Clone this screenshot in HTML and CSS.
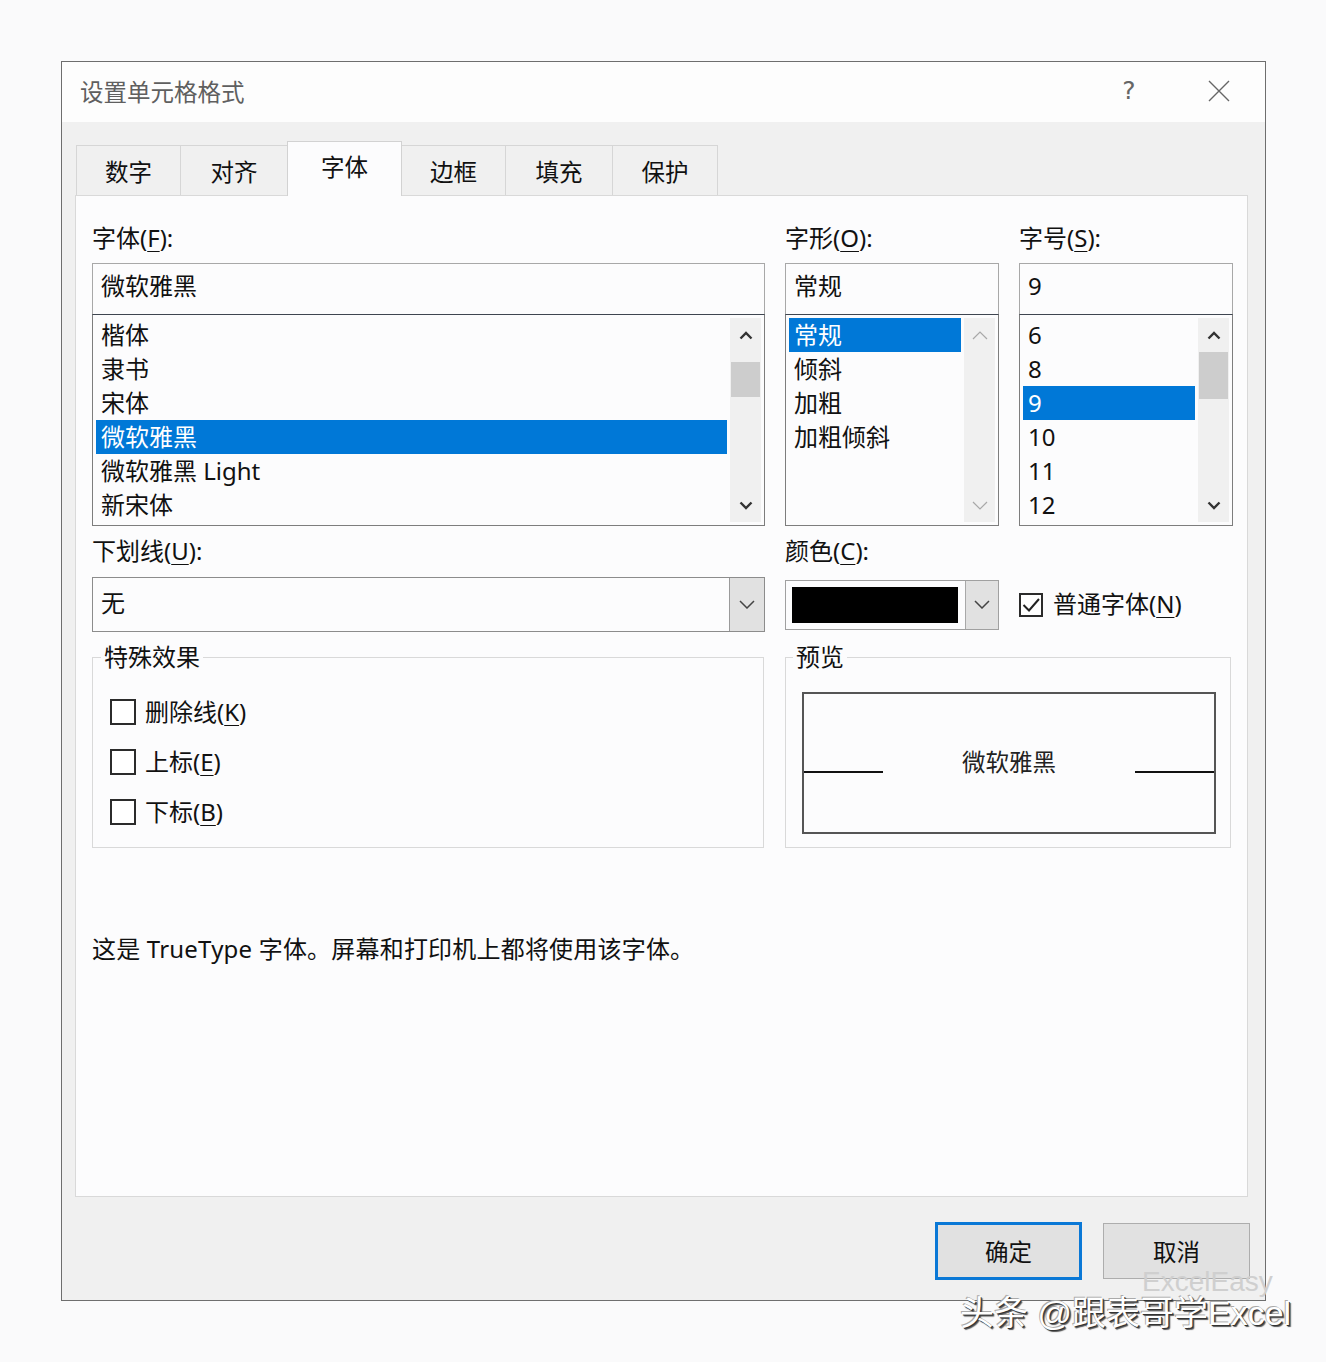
FILE: index.html
```html
<!DOCTYPE html>
<html lang="zh-CN">
<head>
<meta charset="utf-8">
<title>设置单元格格式</title>
<link rel="stylesheet" href="styles.css">
</head>
<body>
<div class="dialog">
  <div class="titlebar">
    <span class="title">设置单元格格式</span>
    <span class="help">?</span>
    <span class="close"><svg width="22" height="22" viewBox="0 0 22 22"><path d="M1 1 L21 21 M21 1 L1 21" stroke="#666" stroke-width="1.4" fill="none"/></svg></span>
  </div>
  <div class="body">
    <div class="tabs">
      <div class="tab w1">数字</div>
      <div class="tab w2">对齐</div>
      <div class="tab w3 active">字体</div>
      <div class="tab w4">边框</div>
      <div class="tab w5">填充</div>
      <div class="tab w6 last">保护</div>
    </div>
    <div class="panel">
      <div class="grid">
        <div class="label">字体(<u>F</u>):</div>
        <div class="label">字形(<u>O</u>):</div>
        <div class="label">字号(<u>S</u>):</div>

        <div class="combo">
          <div class="input">微软雅黑</div>
          <div class="list">
            <div class="items">
              <div class="item">楷体</div>
              <div class="item">隶书</div>
              <div class="item">宋体</div>
              <div class="item sel">微软雅黑</div>
              <div class="item">微软雅黑 Light</div>
              <div class="item">新宋体</div>
            </div>
            <div class="scroll">
              <div class="arrow"><svg width="14" height="9" viewBox="0 0 14 9"><path d="M1.5 7.5 L7 2 L12.5 7.5" stroke="#333" stroke-width="2.4" fill="none"/></svg></div>
              <div class="track"><div class="thumb thumb-font"></div></div>
              <div class="arrow"><svg width="14" height="9" viewBox="0 0 14 9"><path d="M1.5 1.5 L7 7 L12.5 1.5" stroke="#333" stroke-width="2.4" fill="none"/></svg></div>
            </div>
          </div>
        </div>

        <div class="combo">
          <div class="input">常规</div>
          <div class="list">
            <div class="items">
              <div class="item sel">常规</div>
              <div class="item">倾斜</div>
              <div class="item">加粗</div>
              <div class="item">加粗倾斜</div>
            </div>
            <div class="scroll disabled">
              <div class="arrow"><svg width="16" height="9" viewBox="0 0 16 9"><path d="M1 8 L8 1 L15 8" stroke="#a8a8a8" stroke-width="1.2" fill="none"/></svg></div>
              <div class="track"></div>
              <div class="arrow"><svg width="16" height="9" viewBox="0 0 16 9"><path d="M1 1 L8 8 L15 1" stroke="#a8a8a8" stroke-width="1.2" fill="none"/></svg></div>
            </div>
          </div>
        </div>

        <div class="combo">
          <div class="input">9</div>
          <div class="list">
            <div class="items">
              <div class="item">6</div>
              <div class="item">8</div>
              <div class="item sel">9</div>
              <div class="item">10</div>
              <div class="item">11</div>
              <div class="item">12</div>
            </div>
            <div class="scroll">
              <div class="arrow"><svg width="14" height="9" viewBox="0 0 14 9"><path d="M1.5 7.5 L7 2 L12.5 7.5" stroke="#333" stroke-width="2.4" fill="none"/></svg></div>
              <div class="track"><div class="thumb thumb-size"></div></div>
              <div class="arrow"><svg width="14" height="9" viewBox="0 0 14 9"><path d="M1.5 1.5 L7 7 L12.5 1.5" stroke="#333" stroke-width="2.4" fill="none"/></svg></div>
            </div>
          </div>
        </div>

        <div class="label row3">下划线(<u>U</u>):</div>
        <div class="label row3">颜色(<u>C</u>):</div>
        <div class="label row3"></div>

        <div class="select row4">
          <div class="select-text">无</div>
          <div class="drop"><svg width="16" height="9" viewBox="0 0 16 9"><path d="M1 1 L8 8 L15 1" stroke="#444" stroke-width="1.5" fill="none"/></svg></div>
        </div>
        <div class="colorsel row4">
          <div class="swatch"></div>
          <div class="drop"><svg width="16" height="9" viewBox="0 0 16 9"><path d="M1 1 L8 8 L15 1" stroke="#444" stroke-width="1.5" fill="none"/></svg></div>
        </div>
        <div class="check row4">
          <span class="box"><svg width="20" height="20" viewBox="0 0 20 20"><path d="M2.5 10 L8 15.5 L18 4" stroke="#222" stroke-width="2" fill="none"/></svg></span>
          <span class="ctext">普通字体(<u>N</u>)</span>
        </div>

        <div class="group effects">
          <div class="legend">特殊效果</div>
          <div class="checks">
            <div class="check"><span class="box"></span><span class="ctext">删除线(<u>K</u>)</span></div>
            <div class="check"><span class="box"></span><span class="ctext">上标(<u>E</u>)</span></div>
            <div class="check"><span class="box"></span><span class="ctext">下标(<u>B</u>)</span></div>
          </div>
        </div>
        <div class="group preview">
          <div class="legend legend-preview">预览</div>
          <div class="pbox">
            <div class="prow">
              <span class="pline"></span>
              <span class="ptext">微软雅黑</span>
              <span class="pline"></span>
            </div>
          </div>
        </div>
      </div>
      <p class="desc">这是 TrueType 字体。屏幕和打印机上都将使用该字体。</p>
    </div>
    <div class="buttons">
      <div class="btn primary">确定</div>
      <div class="btn">取消</div>
    </div>
  </div>
</div>
<div class="wm-faint">ExcelEasy</div>
<div class="watermark">头条 @跟表哥学Excel</div>
</body>
</html>
```

FILE: styles.css
```css
* { box-sizing: border-box; }
html, body { margin: 0; }
body {
  background: #fafafb;
  padding: 61px 0 0 61px;
  height: 1362px;
  position: relative;
  overflow: hidden;
  font-family: "Noto Sans", "Noto Sans CJK SC", sans-serif;
  color: #111;
  font-size: 24px;
}
u { text-decoration-thickness: 1px; text-underline-offset: 4px; }

.dialog {
  width: 1205px;
  height: 1240px;
  border: 1px solid #6e6e6e;
  background: #f0f0f0;
  display: flex;
  flex-direction: column;
}
.titlebar {
  height: 60px;
  flex: none;
  background: #fdfdfd;
  display: flex;
  align-items: center;
  padding: 0 26px 3px 18px;
}
.title { flex: 1; font-size: 23.5px; color: #5f5f5f; font-family: "Noto Sans CJK SC", sans-serif; }
.help { width: 30px; text-align: center; color: #666; font-size: 25px; font-family: "DejaVu Sans", sans-serif; margin-right: 55px; }
.close { width: 40px; display: flex; justify-content: center; align-items: center; }

.body {
  flex: 1;
  padding: 19px 17px 0 13px;
  display: flex;
  flex-direction: column;
}
.tabs {
  display: flex;
  align-items: flex-end;
  height: 54px;
  margin-left: 1px;
}
.tab {
  height: 50px;
  border: 1px solid #d6d6d6;
  border-bottom: none;
  margin-right: -1px;
  display: flex;
  align-items: center;
  justify-content: center;
  font-family: "Noto Sans CJK SC", sans-serif;
  font-size: 23.5px;
  color: #111;
  background: #f0f0f0;
}
.tab.active {
  height: 55px;
  margin-bottom: -1px;
  background: #fcfcfd;
  position: relative;
  z-index: 1;
  border-color: #d2d2d2;
  padding-bottom: 6px;
}
.w1 { width: 105px; }
.w2 { width: 108px; }
.w3 { width: 115px; }
.w4 { width: 105px; }
.w5 { width: 108px; }
.w6 { width: 106px; }

.panel {
  width: 1173px;
  height: 1002px;
  flex: none;
  border: 1px solid #d9d9d9;
  background: #fcfcfd;
  padding: 27px 13px 0 16px;
}
.grid {
  display: grid;
  grid-template-columns: 673px 214px 214px;
  column-gap: 20px;
}
.label {
  height: 30px;
  line-height: 30px;
  font-size: 24px;
  white-space: nowrap;
}
.label.row3 { margin-top: 10px; }

.combo { margin-top: 10px; }
.input {
  height: 51px;
  border: 1px solid #a8a8a8;
  border-bottom: none;
  padding-left: 8px;
  line-height: 44px;
  font-size: 24px;
}
.list {
  height: 212px;
  border: 1px solid #7d7d7d;
  border-top-color: #3e4550;
  padding: 3px;
  display: flex;
  gap: 3px;
}
.items { flex: 1; min-width: 0; }
.item {
  height: 34px;
  line-height: 34px;
  padding-left: 5px;
  font-size: 24px;
  white-space: nowrap;
}
.item.sel { background: #0078d7; color: #fff; }
.scroll {
  width: 31px;
  background: #f0f0f0;
  display: flex;
  flex-direction: column;
}
.arrow {
  height: 34px;
  display: flex;
  align-items: center;
  justify-content: center;
  flex: none;
}
.track { flex: 1; padding: 0 1px; }
.thumb { background: #cdcdcd; }
.thumb-font { margin-top: 10px; height: 35px; }
.thumb-size { margin-top: 0; height: 47px; }

.row4 { margin-top: 11px; align-self: center; }
.select {
  height: 55px;
  border: 1px solid #8c8c8c;
  display: flex;
}
.select-text { flex: 1; padding-left: 8px; line-height: 50px; font-size: 24px; }
.drop {
  width: 35px;
  background: #e1e1e1;
  border-left: 1px solid #9a9a9a;
  display: flex;
  align-items: center;
  justify-content: center;
}
.colorsel {
  height: 50px;
  border: 1px solid #a0a0a0;
  display: flex;
  align-items: stretch;
  padding-left: 6px;
}
.swatch { width: 166px; margin: 6px 7px 6px 0; background: #000; }
.colorsel .drop { width: 33px; border-left-color: #a8a8a8; }

.check {
  display: flex;
  align-items: center;
  gap: 10px;
  font-size: 24px;
  white-space: nowrap;
}
.ctext { position: relative; top: -2px; }
.box {
  width: 24px;
  height: 24px;
  border: 2px solid #2b2b2b;
  background: #fff;
  display: flex;
  align-items: center;
  justify-content: center;
  flex: none;
}

.group {
  margin-top: 25px;
  height: 191px;
  border: 1px solid #d9d9d9;
}
.effects { width: 672px; }
.preview { grid-column: 2 / 4; width: 446px; }
.legend {
  width: fit-content;
  margin: -16px 0 0 8px;
  padding: 0 3px;
  background: #fcfcfd;
  line-height: 30px;
  height: 30px;
  font-size: 24px;
}
.legend-preview { margin-left: 7px; }
.checks { margin-top: 15px; padding-left: 17px; }
.checks .check { height: 50px; gap: 9px; }
.checks .box { width: 26px; height: 26px; }

.pbox {
  margin: 20px 14px 0 16px;
  height: 142px;
  border: 2px solid #555;
  display: flex;
  align-items: center;
}
.prow {
  width: 100%;
  display: flex;
  align-items: baseline;
  justify-content: space-between;
}
.pline { width: 79px; height: 2px; background: #111; }
.ptext { font-family: "Noto Sans CJK SC", sans-serif; font-size: 23.5px; color: #222; position: relative; top: -2px; }

.desc {
  margin: 86px 0 0 0;
  line-height: 30px;
  font-size: 24px;
  letter-spacing: 0.2px;
}

.buttons {
  margin-top: 25px;
  margin-right: -2px;
  display: flex;
  justify-content: flex-end;
  align-items: center;
  gap: 21px;
}
.btn {
  width: 147px;
  height: 56px;
  background: #e1e1e1;
  border: 1px solid #adadad;
  display: flex;
  align-items: center;
  justify-content: center;
  font-family: "Noto Sans CJK SC", sans-serif;
  font-size: 23.5px;
}
.btn.primary { height: 58px; border: 3px solid #0a78d6; }

.watermark {
  position: absolute;
  left: 960px;
  top: 1296px;
  font-family: "Liberation Sans", "Noto Sans CJK SC", sans-serif;
  font-size: 34px;
  line-height: 34px;
  color: #fff;
  white-space: nowrap;
  text-shadow: 1px 1px 0 #333, 2px 2px 1px #555, -1px -1px 0 #aaa;
}
.wm-faint {
  position: absolute;
  left: 1142px;
  top: 1268px;
  font-family: "Liberation Sans", sans-serif;
  font-size: 28px;
  line-height: 28px;
  color: #cfcfcf;
  white-space: nowrap;
}
```
